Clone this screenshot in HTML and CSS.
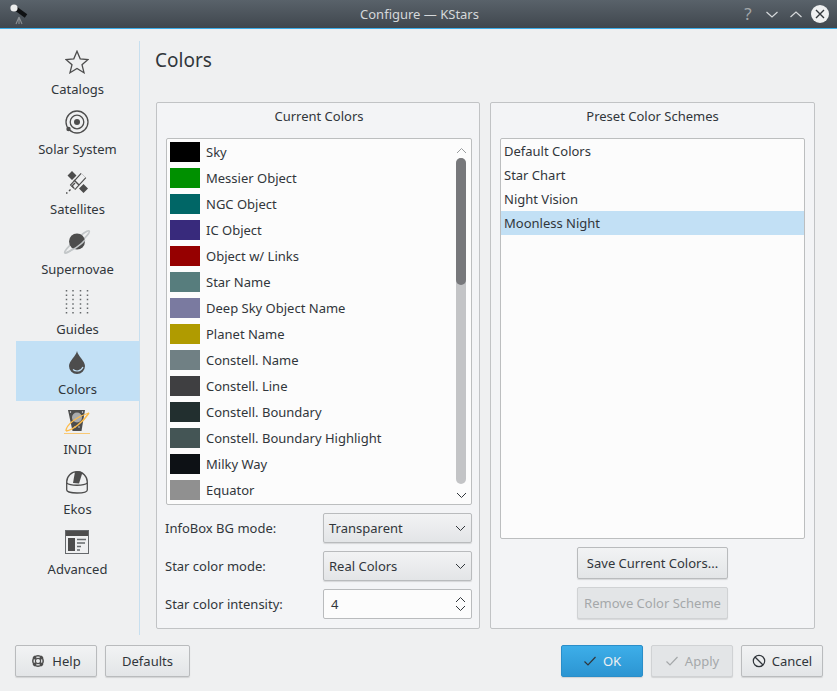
FILE: index.html
```html
<!DOCTYPE html>
<html lang="en">
<head>
	<meta charset="UTF-8">
	<title>Configure — KStars</title>
	<link rel="stylesheet" href="styles.css">
</head>
<body>
<div class="window">
	<div class="titlebar">
		<div class="app-icon">
			<svg width="20" height="22" viewBox="0 0 20 22"><path d="M10 14 L7 21 M10 14 L13 21 M10 14 V21" stroke="#8a8f93" stroke-width="1.1" fill="none"/><path d="M6 5 L17 13" stroke="#0f1113" stroke-width="4.2" fill="none"/><circle cx="5" cy="5" r="3.6" fill="#eceded"/></svg>
		</div>
		<div class="win-title">Configure — KStars</div>
		<div class="win-btns">
			<span class="win-help">?</span>
			<svg width="18" height="18" viewBox="0 0 18 18"><path d="M3.5 7 L9 12 L14.5 7" fill="none" stroke="#d6d9db" stroke-width="1.2"/></svg>
			<svg width="18" height="18" viewBox="0 0 18 18"><path d="M3.5 12 L9 7 L14.5 12" fill="none" stroke="#d6d9db" stroke-width="1.2"/></svg>
			<svg width="18" height="18" viewBox="0 0 18 18"><circle cx="9" cy="9" r="9" fill="#eff0f1"/><path d="M5 5 L13 13 M13 5 L5 13" stroke="#31363b" stroke-width="1.4"/></svg>
		</div>
	</div>

	<div class="content">
		<div class="sidebar">
			<div class="nav-item">
				<svg class="nav-icon" width="24" height="24" viewBox="0 0 24 24"><path d="M12 1.2 L15.2 8.8 L23 9.5 L17 14.7 L19 22.7 L12 18.4 L5 22.7 L7 14.7 L1 9.5 L8.8 8.8 Z" fill="none" stroke="#4d4d4d" stroke-width="1.3"/></svg>
				<span>Catalogs</span>
			</div>
			<div class="nav-item">
				<svg class="nav-icon" width="24" height="24" viewBox="0 0 24 24"><circle cx="12" cy="12" r="11" fill="none" stroke="#4d4d4d" stroke-width="1.3"/><circle cx="12" cy="12" r="6.8" fill="none" stroke="#4d4d4d" stroke-width="1.3"/><circle cx="12" cy="12" r="3" fill="#4d4d4d"/><circle cx="3.5" cy="19" r="2.2" fill="#4d4d4d"/></svg>
				<span>Solar System</span>
			</div>
			<div class="nav-item">
				<svg class="nav-icon" width="24" height="24" viewBox="0 0 24 24"><path d="M7.5 17.5 L18.5 5.5" stroke="#4d4d4d" stroke-width="7.5" fill="none"/><path d="M8 17 L18.5 5.5" stroke="#eff0f1" stroke-width="5.2" fill="none"/><path d="M7 1 L11.5 5.5 L7 10 L2.5 5.5 Z M18.5 14 L23 18.5 L18.5 23 L14 18.5 Z" fill="#4d4d4d"/><path d="M9 10 L14 15" stroke="#4d4d4d" stroke-width="1.4" fill="none"/><path d="M10 13 L7 16 L9 18" stroke="#4d4d4d" stroke-width="1.4" fill="none"/><path d="M1 23 L2.5 23 M4 21 L5.5 19.5" stroke="#4d4d4d" stroke-width="1.4" fill="none"/></svg>
				<span>Satellites</span>
			</div>
			<div class="nav-item">
				<svg class="nav-icon" width="28" height="24" viewBox="0 0 28 24"><ellipse cx="14" cy="12" rx="16.5" ry="2.6" transform="rotate(-42 14 12)" fill="none" stroke="#c3c7c9" stroke-width="1.5"/><circle cx="14" cy="11.5" r="8" fill="#4d4d4d"/><path d="M2 23 C9 21 18 15 22 10" stroke="#c3c7c9" stroke-width="1.5" fill="none"/></svg>
				<span>Supernovae</span>
			</div>
			<div class="nav-item">
				<svg class="nav-icon" width="24" height="24" viewBox="0 0 24 24"><path d="M1.5 0 V24 M8 0 V24 M15.5 0 V24 M22.5 0 V24" stroke="#66696c" stroke-width="1.5" stroke-dasharray="1.5 2.9" fill="none"/></svg>
				<span>Guides</span>
			</div>
			<div class="nav-item selected">
				<svg class="nav-icon" width="24" height="24" viewBox="0 0 24 24"><path d="M12 1 C13 6 20 11 20 16 A8 8 0 0 1 4 16 C4 11 11 6 12 1 Z" fill="#4d4d4d"/><path d="M8 19.5 C11 22 16 21.5 18 17" stroke="#c2e0f5" stroke-width="1.2" fill="none"/></svg>
				<span>Colors</span>
			</div>
			<div class="nav-item">
				<svg class="nav-icon" width="28" height="24" viewBox="0 0 28 24"><path d="M5 0 H22 L18.5 21 H9.5 Z" fill="#4d4d4d"/><circle cx="14" cy="7.5" r="5" fill="#a9abad"/><circle cx="7.5" cy="2" r=".7" fill="#eff0f1"/><circle cx="19.5" cy="2" r=".7" fill="#eff0f1"/><circle cx="12" cy="17" r=".7" fill="#eff0f1"/><circle cx="16" cy="17" r=".7" fill="#eff0f1"/><path d="M3 21 C10 20 20 12 26 3" stroke="#fdbc4b" stroke-width="1.5" fill="none"/><path d="M3 21 C3 15 13 7 26 3" stroke="#fdbc4b" stroke-width="1.3" fill="none"/><path d="M1 24 H27" stroke="#fdbc4b" stroke-width="1.5"/></svg>
				<span>INDI</span>
			</div>
			<div class="nav-item">
				<svg class="nav-icon" width="24" height="24" viewBox="0 0 24 24"><path d="M1.7 12 A10.3 10.3 0 0 1 22.3 12 V20 C22.3 24 1.7 24 1.7 20 Z" fill="none" stroke="#4d4d4d" stroke-width="1.3"/><path d="M1.7 13 C5 16 19 16 22.3 13" fill="none" stroke="#4d4d4d" stroke-width="1.3"/><path d="M10 1.8 C12 1 15.5 1 17.5 2.5 L14 13.5 L8 13 Z" fill="#4d4d4d"/></svg>
				<span>Ekos</span>
			</div>
			<div class="nav-item">
				<svg class="nav-icon" width="24" height="24" viewBox="0 0 24 24"><rect x="0.5" y="0.5" width="23" height="23" fill="#eff0f1" stroke="#66696c"/><rect x="1" y="1" width="22" height="5" fill="#4d4d4d"/><rect x="3" y="8" width="7" height="13" fill="#4d4d4d"/><path d="M12 9.5 H21 M12 13 H20 M12 16.5 H16 M12 20 H15" stroke="#66696c" stroke-width="1.3"/></svg>
				<span>Advanced</span>
			</div>
		</div>

		<div class="main">
			<h1 class="page-title">Colors</h1>
			<div class="groups">
				<div class="group group-left">
					<div class="group-title">Current Colors</div>
					<div class="list color-list">
						<div class="rows">
							<div class="color-row"><i class="swatch c-sky"></i>Sky</div>
							<div class="color-row"><i class="swatch c-messier"></i>Messier Object</div>
							<div class="color-row"><i class="swatch c-ngc"></i>NGC Object</div>
							<div class="color-row"><i class="swatch c-ic"></i>IC Object</div>
							<div class="color-row"><i class="swatch c-links"></i>Object w/ Links</div>
							<div class="color-row"><i class="swatch c-star"></i>Star Name</div>
							<div class="color-row"><i class="swatch c-dso"></i>Deep Sky Object Name</div>
							<div class="color-row"><i class="swatch c-planet"></i>Planet Name</div>
							<div class="color-row"><i class="swatch c-cname"></i>Constell. Name</div>
							<div class="color-row"><i class="swatch c-cline"></i>Constell. Line</div>
							<div class="color-row"><i class="swatch c-cbound"></i>Constell. Boundary</div>
							<div class="color-row"><i class="swatch c-chigh"></i>Constell. Boundary Highlight</div>
							<div class="color-row"><i class="swatch c-milky"></i>Milky Way</div>
							<div class="color-row"><i class="swatch c-equator"></i>Equator</div>
						</div>
						<div class="scrollbar">
							<svg width="11" height="8" viewBox="0 0 11 8"><path d="M1 6 L5.5 1.5 L10 6" fill="none" stroke="#9a9d9f" stroke-width="1"/></svg>
							<div class="track"><div class="thumb"></div></div>
							<svg width="11" height="8" viewBox="0 0 11 8"><path d="M1 2 L5.5 6.5 L10 2" fill="none" stroke="#31363b" stroke-width="1"/></svg>
						</div>
					</div>
					<div class="form-row">
						<label>InfoBox BG mode:</label>
						<div class="combo"><span>Transparent</span>
							<svg width="11" height="8" viewBox="0 0 11 8"><path d="M1 2 L5.5 6.5 L10 2" fill="none" stroke="#31363b" stroke-width="1"/></svg>
						</div>
					</div>
					<div class="form-row">
						<label>Star color mode:</label>
						<div class="combo"><span>Real Colors</span>
							<svg width="11" height="8" viewBox="0 0 11 8"><path d="M1 2 L5.5 6.5 L10 2" fill="none" stroke="#31363b" stroke-width="1"/></svg>
						</div>
					</div>
					<div class="form-row">
						<label>Star color intensity:</label>
						<div class="spin"><span>4</span>
							<div class="spin-arrows">
								<svg width="11" height="8" viewBox="0 0 11 8"><path d="M1 6 L5.5 1.5 L10 6" fill="none" stroke="#31363b" stroke-width="1"/></svg>
								<svg width="11" height="8" viewBox="0 0 11 8"><path d="M1 2 L5.5 6.5 L10 2" fill="none" stroke="#31363b" stroke-width="1"/></svg>
							</div>
						</div>
					</div>
				</div>

				<div class="group group-right">
					<div class="group-title">Preset Color Schemes</div>
					<div class="list scheme-list">
						<div class="scheme-row">Default Colors</div>
						<div class="scheme-row">Star Chart</div>
						<div class="scheme-row">Night Vision</div>
						<div class="scheme-row selected">Moonless Night</div>
					</div>
					<div class="scheme-btns">
						<div class="btn btn-wide">Save Current Colors...</div>
						<div class="btn btn-wide disabled">Remove Color Scheme</div>
					</div>
				</div>
			</div>
		</div>
	</div>

	<div class="footer">
		<div class="btn btn-help">
			<svg width="14" height="14" viewBox="0 0 14 14"><circle cx="7" cy="7" r="5.2" fill="none" stroke="#4d4d4d" stroke-width="1.5"/><circle cx="7" cy="7" r="2.6" fill="none" stroke="#4d4d4d" stroke-width="1.2"/><path d="M2.5 2.5 L5 5 M11.5 2.5 L9 5 M2.5 11.5 L5 9 M11.5 11.5 L9 9" stroke="#4d4d4d" stroke-width="2.6"/></svg>
			Help
		</div>
		<div class="btn btn-defaults">Defaults</div>
		<div class="footer-gap"></div>
		<div class="btn btn-ok">
			<svg width="14" height="14" viewBox="0 0 14 14"><path d="M1.5 7.5 L5 11 L12.5 3" fill="none" stroke="#31363b" stroke-width="1.2"/></svg>
			OK
		</div>
		<div class="btn btn-apply disabled">
			<svg width="14" height="14" viewBox="0 0 14 14"><path d="M1.5 7.5 L5 11 L12.5 3" fill="none" stroke="#a5a8aa" stroke-width="1.2"/></svg>
			Apply
		</div>
		<div class="btn btn-cancel">
			<svg width="14" height="14" viewBox="0 0 14 14"><circle cx="7" cy="7" r="5.7" fill="none" stroke="#31363b" stroke-width="1.2"/><path d="M3 3 L11 11" stroke="#31363b" stroke-width="1.2"/></svg>
			Cancel
		</div>
	</div>
</div>
</body>
</html>
```

FILE: styles.css
```css
*{margin:0; padding:0; box-sizing:border-box;}
html,body{width:837px; height:691px; overflow:hidden;}
body{background:#eff0f1; color:#31363b; font-family:"Noto Sans","Open Sans",sans-serif; font-size:13px; line-height:18px;}
svg{display:block; flex:none;}

.window{width:837px; height:691px; display:flex; flex-direction:column;}

/* title bar */
.titlebar{height:29px; flex:none; display:flex; align-items:center; background:linear-gradient(#59626a,#40474e); border-bottom:1px solid #3daee9;}
.app-icon{width:120px; padding-left:9px;}
.win-title{flex:1; text-align:center; color:#d5d8da; font-size:13px; padding-left:2px;}
.win-btns{width:120px; display:flex; align-items:center; justify-content:flex-end; gap:6px; padding-right:8px;}
.win-help{color:#a3a7aa; font-size:17px; width:18px; text-align:center;}

/* body of the dialog */
.content{flex:1; display:flex; padding:12px 22px 0 16px; min-height:0;}
.sidebar{width:124px; height:594px; flex:none; border-right:1px solid #c7dfef;}
.nav-item{height:60px; display:flex; flex-direction:column; align-items:center; padding-top:9px; gap:6px;}
.nav-icon{height:24px; margin-left:-1px;}
.nav-item.selected{background:#c2e0f5;}

.main{flex:1; padding-left:15px; display:flex; flex-direction:column;}
.page-title{font-size:19px; font-weight:400; line-height:26px; margin-top:6px;}
.groups{display:flex; gap:10px; margin-top:29px; margin-left:1px;}
.group{height:527px; background:#f3f4f6; border:1px solid #c1c3c5; border-radius:2px;}
.group-left{width:324px; padding:0 7px 0 9px;}
.group-right{width:325px; padding:0 9px;}
.group-title{height:35px; text-align:center; padding-top:4px;}

.list{background:#fcfcfc; border:1px solid #bcbebf; border-radius:2px;}
.color-list{height:367px; display:flex;}
.rows{flex:1;}
.color-row{height:26px; display:flex; align-items:center; padding-left:3px;}
.swatch{display:block; width:30px; height:20px; margin-right:6px;}
.c-sky{background:#000;}
.c-messier{background:#009000;}
.c-ngc{background:#006666;}
.c-ic{background:#382a7c;}
.c-links{background:#960000;}
.c-star{background:#577d7d;}
.c-dso{background:#7a7aa0;}
.c-planet{background:#b09b00;}
.c-cname{background:#708084;}
.c-cline{background:#3f3f41;}
.c-cbound{background:#222f2f;}
.c-chigh{background:#445555;}
.c-milky{background:#0d1115;}
.c-equator{background:#909090;}

.scrollbar{width:20px; padding:8px 0 5px; display:flex; flex-direction:column; align-items:center;}
.track{flex:1; width:10px; margin:3px 0 7px; background:#c3c4c6; border-radius:5px;}
.thumb{height:127px; background:#77787b; border-radius:5px;}

.form-row{height:30px; margin-top:8px; display:flex; align-items:center; justify-content:space-between;}
.form-row label{margin-left:-1px;}
.combo,.spin{width:149px; height:30px; display:flex; align-items:center; justify-content:space-between; padding:0 5px; border:1px solid #b9bbbd; border-radius:2px;}
.combo{background:linear-gradient(#f2f3f4,#e3e5e7); box-shadow:0 1px 1px rgba(0,0,0,.12);}
.spin{background:#fcfcfc; padding-left:7px;}
.spin-arrows{display:flex; flex-direction:column;}

.scheme-list{height:401px;}
.scheme-row{height:24px; line-height:24px; padding-left:3px;}
.scheme-row.selected{background:#c2e0f5;}
.scheme-btns{display:flex; flex-direction:column; align-items:center; gap:8px; margin-top:8px;}

.btn{height:32px; display:flex; align-items:center; justify-content:center; gap:6px; background:linear-gradient(#f2f3f4,#e3e5e7); border:1px solid #b9bbbd; border-radius:2px; box-shadow:0 1px 1px rgba(0,0,0,.12);}
.btn-wide{width:151px;}
.btn.disabled{color:#a5a8aa; background:#e3e5e7; border-color:#d0d2d4;}

.footer{height:46px; flex:none; display:flex; gap:8px; padding:0 14px 0 15px;}
.footer-gap{flex:1;}
.btn-help{width:82px; gap:7px;}
.btn-defaults{width:85px;}
.btn-ok{width:82px; color:#eff0f1; background:linear-gradient(#3daee9,#2c95d2); border-color:#2a8ec9;}
.btn-apply{width:82px;}
.btn-cancel{width:82px;}
```
